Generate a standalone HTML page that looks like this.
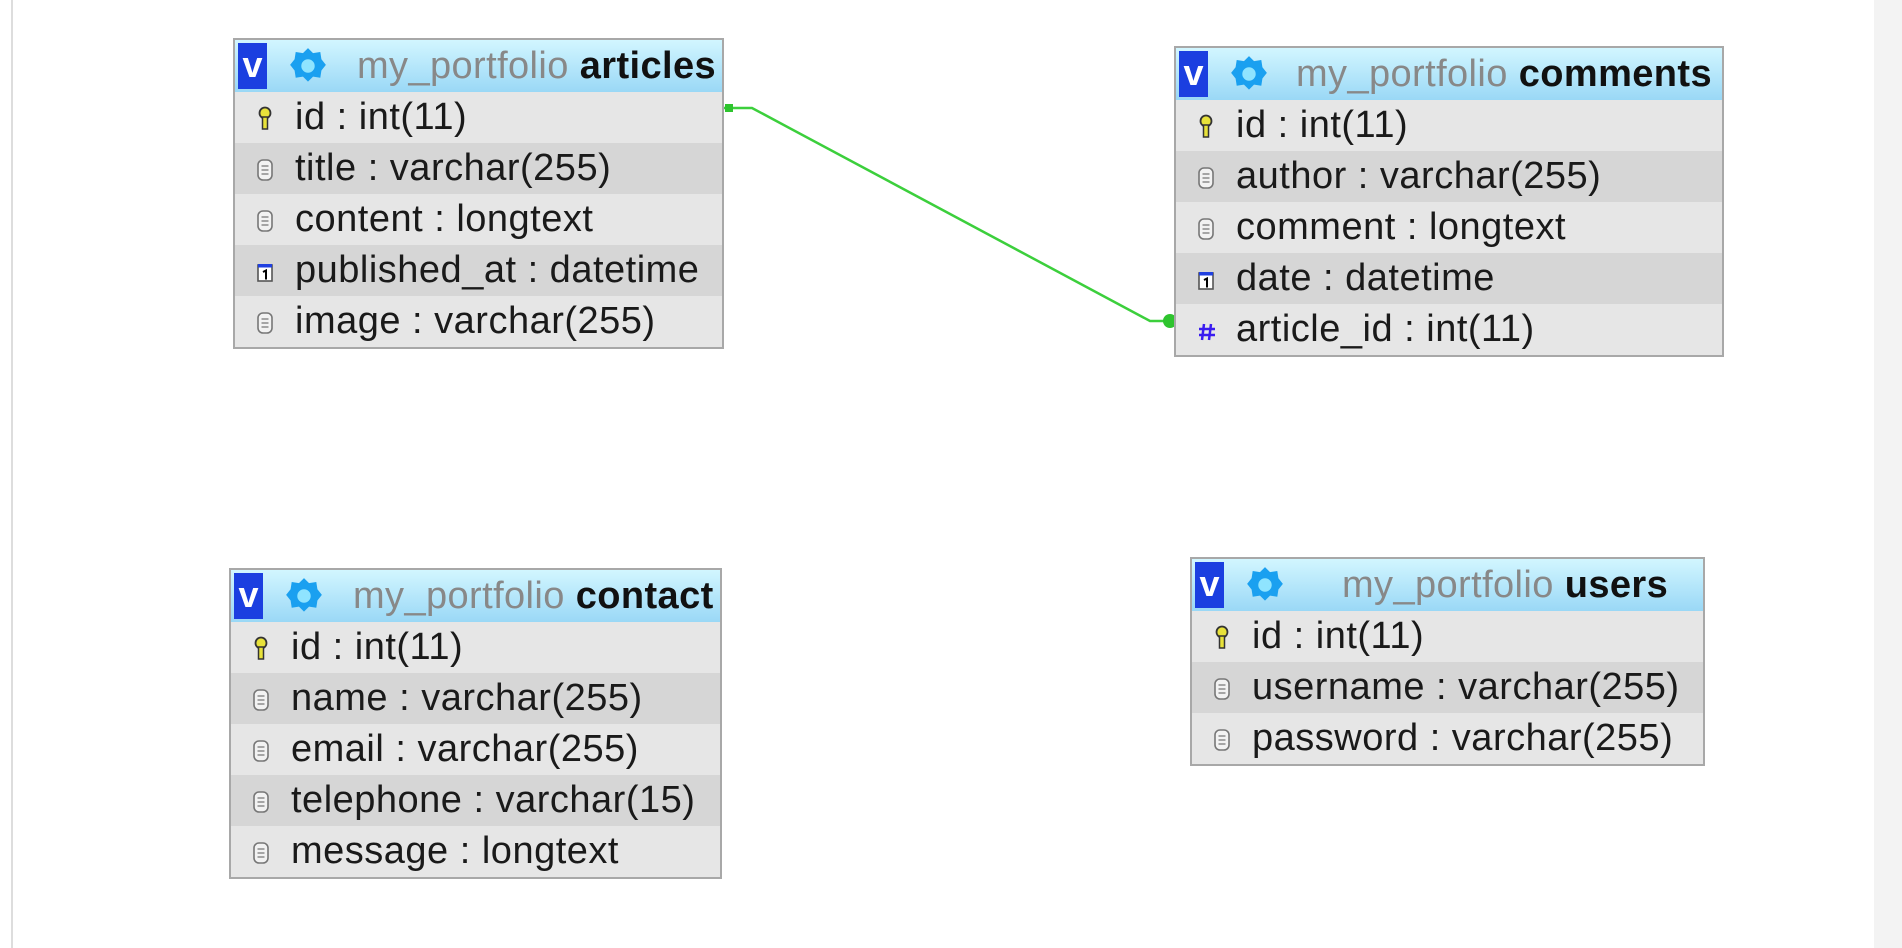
<!DOCTYPE html>
<html><head><meta charset="utf-8"><style>
*{margin:0;padding:0;box-sizing:border-box}
body{width:1902px;height:948px;background:#fff;position:relative;overflow:hidden;font-family:"Liberation Sans",Arial,sans-serif}
.lline{position:absolute;left:11px;top:0;width:2px;height:948px;background:#ddd}
.rstrip{position:absolute;left:1874px;top:0;width:28px;height:948px;background:#f3f3f3}
.t{position:absolute;border:2px solid #a8a8a8;background:#e6e6e6}
.h{height:52px;background:linear-gradient(#d2f6ff,#9ad8f6);position:relative;white-space:nowrap}
.v{position:absolute;left:3px;top:3px;width:29px;height:46px;background:#1b3fe0;color:#fff;font-weight:bold;font-size:36px;line-height:44px;text-align:center}
.g{position:absolute;left:54px;top:7px}
.ht{position:absolute;top:0;line-height:52px;font-size:38px;color:#888;letter-spacing:0.4px}
.ht b{color:#111}
.r{height:51px;line-height:50px;font-size:38px;color:#1a1a1a;padding-left:60px;position:relative;white-space:nowrap;letter-spacing:0.5px}
.r:nth-child(odd){background:#d6d6d6}
.r svg{position:absolute;left:22px;top:14px}
</style></head><body>
<div class="lline"></div><div class="rstrip"></div>

<svg width="1902" height="948" style="position:absolute;left:0;top:0">
<polyline points="724,108 752,108 1150,321 1174,321" fill="none" stroke="#3ccf3c" stroke-width="2.5"/>
<rect x="725" y="104" width="8" height="8" fill="#2ec42e"/>
<circle cx="1170" cy="321" r="7" fill="#2ec42e"/>
</svg>

<div class="t" style="left:233px;top:38px;width:491px">
 <div class="h"><div class="v">v</div>
  <svg class="g" width="38" height="38" viewBox="0 0 34 34"><path d="M17 1l4.5 4.5 6.5-1 1 6.5 4 5-4 5-1 6.5-6.5-1-4.5 4.5-4.5-4.5-6.5 1-1-6.5-4-5 4-5 1-6.5 6.5 1z" fill="#1aa0f0"/><circle cx="17" cy="17" r="6" fill="#8fe4ff"/></svg>
  <div class="ht" style="left:122px">my_portfolio <b>articles</b></div></div>
 <div class="r"><svg width="16" height="24"><circle cx="8" cy="7" r="5.5" fill="#e8e23a" stroke="#333" stroke-width="1.8"/><rect x="5.5" y="11" width="5" height="12" fill="#e8e23a" stroke="#333" stroke-width="1.5"/></svg>id : int(11)</div>
 <div class="r"><svg width="16" height="24"><rect x="1" y="3" width="14" height="20" rx="5" fill="#f2f2f2" stroke="#777" stroke-width="1.6"/><path d="M4.5 9h7M4.5 13h7M4.5 17h7" stroke="#777" stroke-width="1.3"/></svg>title : varchar(255)</div>
 <div class="r"><svg width="16" height="24"><rect x="1" y="3" width="14" height="20" rx="5" fill="#f2f2f2" stroke="#777" stroke-width="1.6"/><path d="M4.5 9h7M4.5 13h7M4.5 17h7" stroke="#777" stroke-width="1.3"/></svg>content : longtext</div>
 <div class="r"><svg width="16" height="24"><rect x="1" y="6" width="14" height="16" fill="#fff" stroke="#555" stroke-width="1.6"/><rect x="1" y="5" width="14" height="3.5" fill="#2040e0"/><path d="M6 13l3-1.5v9" stroke="#000" stroke-width="2" fill="none"/></svg>published_at : datetime</div>
 <div class="r"><svg width="16" height="24"><rect x="1" y="3" width="14" height="20" rx="5" fill="#f2f2f2" stroke="#777" stroke-width="1.6"/><path d="M4.5 9h7M4.5 13h7M4.5 17h7" stroke="#777" stroke-width="1.3"/></svg>image : varchar(255)</div>
</div>

<div class="t" style="left:1174px;top:46px;width:550px">
 <div class="h"><div class="v">v</div>
  <svg class="g" width="38" height="38" viewBox="0 0 34 34"><path d="M17 1l4.5 4.5 6.5-1 1 6.5 4 5-4 5-1 6.5-6.5-1-4.5 4.5-4.5-4.5-6.5 1-1-6.5-4-5 4-5 1-6.5 6.5 1z" fill="#1aa0f0"/><circle cx="17" cy="17" r="6" fill="#8fe4ff"/></svg>
  <div class="ht" style="left:120px">my_portfolio <b>comments</b></div></div>
 <div class="r"><svg width="16" height="24"><circle cx="8" cy="7" r="5.5" fill="#e8e23a" stroke="#333" stroke-width="1.8"/><rect x="5.5" y="11" width="5" height="12" fill="#e8e23a" stroke="#333" stroke-width="1.5"/></svg>id : int(11)</div>
 <div class="r"><svg width="16" height="24"><rect x="1" y="3" width="14" height="20" rx="5" fill="#f2f2f2" stroke="#777" stroke-width="1.6"/><path d="M4.5 9h7M4.5 13h7M4.5 17h7" stroke="#777" stroke-width="1.3"/></svg>author : varchar(255)</div>
 <div class="r"><svg width="16" height="24"><rect x="1" y="3" width="14" height="20" rx="5" fill="#f2f2f2" stroke="#777" stroke-width="1.6"/><path d="M4.5 9h7M4.5 13h7M4.5 17h7" stroke="#777" stroke-width="1.3"/></svg>comment : longtext</div>
 <div class="r"><svg width="16" height="24"><rect x="1" y="6" width="14" height="16" fill="#fff" stroke="#555" stroke-width="1.6"/><rect x="1" y="5" width="14" height="3.5" fill="#2040e0"/><path d="M6 13l3-1.5v9" stroke="#000" stroke-width="2" fill="none"/></svg>date : datetime</div>
 <div class="r"><svg width="18" height="24"><path d="M6 6l-2 16M13 6l-2 16M1 11h16M1 17h16" stroke="#3a1cf0" stroke-width="2.5"/></svg>article_id : int(11)</div>
</div>

<div class="t" style="left:229px;top:568px;width:493px">
 <div class="h"><div class="v">v</div>
  <svg class="g" width="38" height="38" viewBox="0 0 34 34"><path d="M17 1l4.5 4.5 6.5-1 1 6.5 4 5-4 5-1 6.5-6.5-1-4.5 4.5-4.5-4.5-6.5 1-1-6.5-4-5 4-5 1-6.5 6.5 1z" fill="#1aa0f0"/><circle cx="17" cy="17" r="6" fill="#8fe4ff"/></svg>
  <div class="ht" style="left:122px">my_portfolio <b>contact</b></div></div>
 <div class="r"><svg width="16" height="24"><circle cx="8" cy="7" r="5.5" fill="#e8e23a" stroke="#333" stroke-width="1.8"/><rect x="5.5" y="11" width="5" height="12" fill="#e8e23a" stroke="#333" stroke-width="1.5"/></svg>id : int(11)</div>
 <div class="r"><svg width="16" height="24"><rect x="1" y="3" width="14" height="20" rx="5" fill="#f2f2f2" stroke="#777" stroke-width="1.6"/><path d="M4.5 9h7M4.5 13h7M4.5 17h7" stroke="#777" stroke-width="1.3"/></svg>name : varchar(255)</div>
 <div class="r"><svg width="16" height="24"><rect x="1" y="3" width="14" height="20" rx="5" fill="#f2f2f2" stroke="#777" stroke-width="1.6"/><path d="M4.5 9h7M4.5 13h7M4.5 17h7" stroke="#777" stroke-width="1.3"/></svg>email : varchar(255)</div>
 <div class="r"><svg width="16" height="24"><rect x="1" y="3" width="14" height="20" rx="5" fill="#f2f2f2" stroke="#777" stroke-width="1.6"/><path d="M4.5 9h7M4.5 13h7M4.5 17h7" stroke="#777" stroke-width="1.3"/></svg>telephone : varchar(15)</div>
 <div class="r"><svg width="16" height="24"><rect x="1" y="3" width="14" height="20" rx="5" fill="#f2f2f2" stroke="#777" stroke-width="1.6"/><path d="M4.5 9h7M4.5 13h7M4.5 17h7" stroke="#777" stroke-width="1.3"/></svg>message : longtext</div>
</div>

<div class="t" style="left:1190px;top:557px;width:515px">
 <div class="h"><div class="v">v</div>
  <svg class="g" width="38" height="38" viewBox="0 0 34 34"><path d="M17 1l4.5 4.5 6.5-1 1 6.5 4 5-4 5-1 6.5-6.5-1-4.5 4.5-4.5-4.5-6.5 1-1-6.5-4-5 4-5 1-6.5 6.5 1z" fill="#1aa0f0"/><circle cx="17" cy="17" r="6" fill="#8fe4ff"/></svg>
  <div class="ht" style="left:150px">my_portfolio <b>users</b></div></div>
 <div class="r"><svg width="16" height="24"><circle cx="8" cy="7" r="5.5" fill="#e8e23a" stroke="#333" stroke-width="1.8"/><rect x="5.5" y="11" width="5" height="12" fill="#e8e23a" stroke="#333" stroke-width="1.5"/></svg>id : int(11)</div>
 <div class="r"><svg width="16" height="24"><rect x="1" y="3" width="14" height="20" rx="5" fill="#f2f2f2" stroke="#777" stroke-width="1.6"/><path d="M4.5 9h7M4.5 13h7M4.5 17h7" stroke="#777" stroke-width="1.3"/></svg>username : varchar(255)</div>
 <div class="r"><svg width="16" height="24"><rect x="1" y="3" width="14" height="20" rx="5" fill="#f2f2f2" stroke="#777" stroke-width="1.6"/><path d="M4.5 9h7M4.5 13h7M4.5 17h7" stroke="#777" stroke-width="1.3"/></svg>password : varchar(255)</div>
</div>
</body></html>
